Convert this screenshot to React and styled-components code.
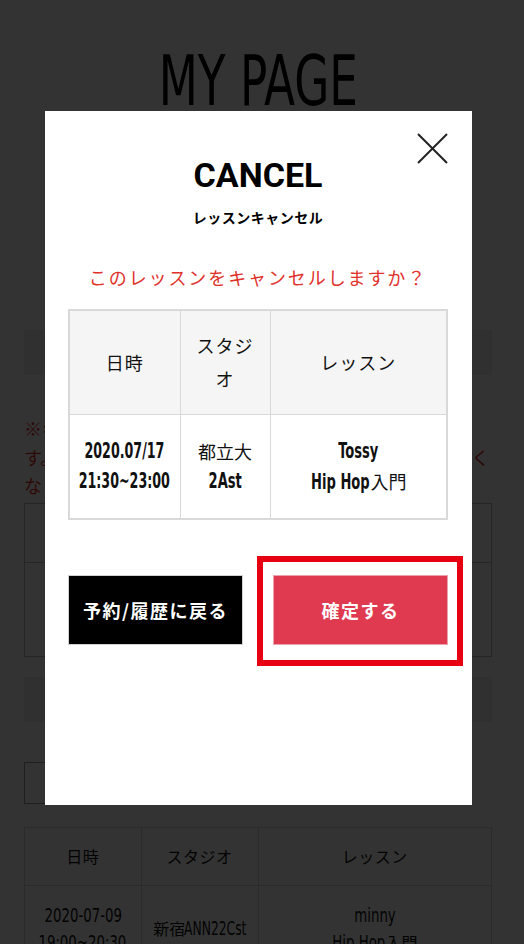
import React from "react";
import styled, { createGlobalStyle } from "styled-components";

const GlobalStyle = createGlobalStyle`
  html, body {
    margin: 0;
    padding: 0;
    overflow: hidden;
    background: #fff;
  }
  body {
    font-family: "Noto Sans CJK JP", "Noto Sans", sans-serif;
    color: #111;
  }
`;

const condensed = `"DejaVu Sans Condensed", "Noto Sans CJK JP", sans-serif`;

/* ---------- shared bits ---------- */

// stacked lines in a table cell, centred even when a line overflows
const Lines = styled.div`
  display: flex;
  flex-direction: column;
  align-items: center;
`;

const Line = styled.div`
  display: flex;
  justify-content: center;
  align-items: baseline;
  white-space: nowrap;
`;

// latin text squeezed to look like a condensed display face
const Narrow = styled.span`
  display: inline-block;
  font-family: ${condensed};
  font-weight: ${(p) => (p.$bold ? 700 : 400)};
  font-size: ${(p) => p.$size || 20}px;
  transform: scaleX(${(p) => p.$scale || 0.7});
  margin: 0 ${(p) => p.$pull || 0}px;
`;

/* ---------- page under the overlay ---------- */

const Page = styled.div`
  width: 516px;
  padding: 46px 24px 0;
  box-sizing: border-box;
`;

const TitleWrap = styled.div`
  display: flex;
  justify-content: center;
`;

const Title = styled.h1`
  margin: 0;
  font-family: ${condensed};
  font-weight: 400;
  font-size: 70px;
  line-height: 1;
  color: #000;
  transform: scaleX(0.72);
`;

const GreyBar = styled.div`
  margin-top: ${(p) => p.$top}px;
  height: 45px;
  background: #f0f0f0;
  display: flex;
  align-items: center;
  justify-content: center;
  font-size: 16px;
  font-weight: 700;
`;

const Note = styled.p`
  margin: 39px 0 0;
  font-size: 18px;
  line-height: 28.5px;
  color: #e0312a;
  white-space: nowrap;
`;

const ListTable = styled.table`
  margin-top: ${(p) => p.$top}px;
  width: 100%;
  border-collapse: collapse;
  table-layout: fixed;
  border: 1px solid ${(p) => p.$line};

  th,
  td {
    border: 1px solid ${(p) => p.$line};
    text-align: center;
    vertical-align: middle;
    padding: 0 4px;
  }
  th {
    height: ${(p) => p.$head}px;
    font-size: 16px;
    font-weight: 400;
    letter-spacing: 0.5px;
  }
  td {
    height: ${(p) => p.$body}px;
    font-size: 16px;
    line-height: 27px;
  }
`;

const SelectBox = styled.div`
  margin-top: 40px;
  width: 220px;
  height: 42px;
  border: 1px solid #999;
  box-sizing: border-box;
  display: flex;
  align-items: center;
  justify-content: center;
  font-size: 15px;
`;

/* ---------- overlay + modal ---------- */

const Overlay = styled.div`
  position: fixed;
  inset: 0;
  background: rgba(0, 0, 0, 0.8);
`;

const Modal = styled.div`
  position: fixed;
  top: 111px;
  left: 45px;
  width: 427px;
  height: 694px;
  box-sizing: border-box;
  padding: 44px 24px 0 23px;
  background: #fff;
  display: flex;
  flex-direction: column;
  align-items: center;
`;

const CloseButton = styled.button`
  position: absolute;
  top: 22px;
  right: 24px;
  width: 31px;
  height: 31px;
  padding: 0;
  border: none;
  background: transparent;
  cursor: pointer;
`;

const ModalTitle = styled.h2`
  margin: 0;
  font-family: Roboto, "Liberation Sans", sans-serif;
  font-weight: 700;
  font-size: 34px;
  line-height: 1.2;
  color: #000;
`;

const ModalSub = styled.div`
  margin-top: 11px;
  font-size: 14px;
  font-weight: 700;
  line-height: 21px;
  letter-spacing: 0.5px;
  color: #000;
`;

const Question = styled.p`
  margin: 36px 0 0;
  font-size: 18px;
  line-height: 27px;
  letter-spacing: 1.9px;
  color: #e0312a;
`;

const DetailTable = styled.table`
  margin-top: 18px;
  width: 100%;
  border-collapse: collapse;
  table-layout: fixed;
  border: 2px solid #d9d9d9;

  th,
  td {
    border: 1px solid #d9d9d9;
    text-align: center;
    vertical-align: middle;
    color: #111;
  }
  th {
    height: 103px;
    padding: 0 10px;
    background: #f5f5f5;
    font-size: 18px;
    font-weight: 400;
    line-height: 33px;
    letter-spacing: 1px;
  }
  td {
    height: 103px;
    padding: 0 4px;
    font-size: 18px;
    line-height: 30px;
  }
`;

const ButtonRow = styled.div`
  margin-top: 55px;
  width: 100%;
  display: grid;
  grid-template-columns: 1fr 1fr;
  gap: 30px;
`;

const ActionButton = styled.button`
  width: 100%;
  height: 70px;
  border: 1px solid ${(p) => (p.$primary ? "#eaa3ac" : "#d0d0d0")};
  background: ${(p) => (p.$primary ? "#df3a50" : "#000")};
  color: #fff;
  font-family: "Noto Sans CJK JP", sans-serif;
  font-size: 18px;
  font-weight: 700;
  letter-spacing: 1.5px;
  cursor: pointer;
`;

const Highlight = styled.div`
  position: relative;

  &::after {
    content: "";
    position: absolute;
    top: -19px;
    left: -16px;
    right: -15px;
    bottom: -21px;
    border: 6px solid #e60012;
    pointer-events: none;
  }
`;

const CloseIcon = () => (
  <svg width="31" height="31" viewBox="0 0 31 31">
    <path d="M1 1 L30 30 M30 1 L1 30" stroke="#222" strokeWidth="2" fill="none" />
  </svg>
);

const HeadRow = () => (
  <thead>
    <tr>
      <th>日時</th>
      <th>スタジオ</th>
      <th>レッスン</th>
    </tr>
  </thead>
);

const ListCols = () => (
  <colgroup>
    <col style={{ width: "25%" }} />
    <col style={{ width: "25%" }} />
    <col style={{ width: "50%" }} />
  </colgroup>
);

export default function App() {
  return (
    <>
      <GlobalStyle />
      <Page>
        <TitleWrap>
          <Title>MY PAGE</Title>
        </TitleWrap>
        <GreyBar $top={214}>予約中のレッスン</GreyBar>
        <Note>
          ※キャンセルの受付はレッスン開始の3時間前までで
          <br />
          す。受付期限を過ぎますと、予約のキャンセルができなく
          <br />
          なりますのでご注意ください。
        </Note>
        <ListTable $top={3} $line="#bbb" $head={58} $body={93}>
          <ListCols />
          <HeadRow />
          <tbody>
            <tr>
              <td>
                <Lines>
                  <Line>
                    <Narrow $size={18} $scale={0.6}>2020-07-17</Narrow>
                  </Line>
                  <Line>
                    <Narrow $size={18} $scale={0.6}>21:30~23:00</Narrow>
                  </Line>
                </Lines>
              </td>
              <td>
                <Line>
                  都立大<Narrow $size={18} $scale={0.72} $pull={-6}>2Ast</Narrow>
                </Line>
              </td>
              <td>
                <Lines>
                  <Line>
                    <Narrow $size={18} $scale={0.74}>Tossy</Narrow>
                  </Line>
                  <Line>
                    <Narrow $size={18} $scale={0.74} $pull={-8}>Hip Hop</Narrow>入門
                  </Line>
                </Lines>
              </td>
            </tr>
          </tbody>
        </ListTable>
        <GreyBar $top={20}>予約履歴</GreyBar>
        <SelectBox>2020年7月</SelectBox>
        <ListTable $top={23} $line="#d5d5d5" $head={57} $body={86}>
          <ListCols />
          <HeadRow />
          <tbody>
            <tr>
              <td>
                <Lines>
                  <Line>
                    <Narrow $size={20} $scale={0.74}>2020-07-09</Narrow>
                  </Line>
                  <Line>
                    <Narrow $size={20} $scale={0.74}>19:00~20:30</Narrow>
                  </Line>
                </Lines>
              </td>
              <td>
                <Line>
                  新宿<Narrow $size={19} $scale={0.72} $pull={-13}>ANN22Cst</Narrow>
                </Line>
              </td>
              <td>
                <Lines>
                  <Line>
                    <Narrow $size={20} $scale={0.74}>minny</Narrow>
                  </Line>
                  <Line>
                    <Narrow $size={20} $scale={0.74} $pull={-9}>Hip Hop</Narrow>入門
                  </Line>
                </Lines>
              </td>
            </tr>
          </tbody>
        </ListTable>
      </Page>

      <Overlay />
      <Modal>
        <CloseButton aria-label="閉じる">
          <CloseIcon />
        </CloseButton>
        <ModalTitle>CANCEL</ModalTitle>
        <ModalSub>レッスンキャンセル</ModalSub>
        <Question>このレッスンをキャンセルしますか？</Question>
        <DetailTable>
          <colgroup>
            <col style={{ width: "111px" }} />
            <col style={{ width: "90px" }} />
            <col />
          </colgroup>
          <HeadRow />
          <tbody>
            <tr>
              <td>
                <Lines>
                  <Line>
                    <Narrow $bold $size={22} $scale={0.64}>2020.07/17</Narrow>
                  </Line>
                  <Line>
                    <Narrow $bold $size={22} $scale={0.64}>21:30~23:00</Narrow>
                  </Line>
                </Lines>
              </td>
              <td>
                <Lines>
                  <Line>都立大</Line>
                  <Line>
                    <Narrow $bold $size={22} $scale={0.66}>2Ast</Narrow>
                  </Line>
                </Lines>
              </td>
              <td>
                <Lines>
                  <Line>
                    <Narrow $bold $size={22} $scale={0.66}>Tossy</Narrow>
                  </Line>
                  <Line>
                    <Narrow $bold $size={22} $scale={0.66} $pull={-14}>Hip Hop</Narrow>入門
                  </Line>
                </Lines>
              </td>
            </tr>
          </tbody>
        </DetailTable>
        <ButtonRow>
          <ActionButton>予約/履歴に戻る</ActionButton>
          <Highlight>
            <ActionButton $primary>確定する</ActionButton>
          </Highlight>
        </ButtonRow>
      </Modal>
    </>
  );
}
